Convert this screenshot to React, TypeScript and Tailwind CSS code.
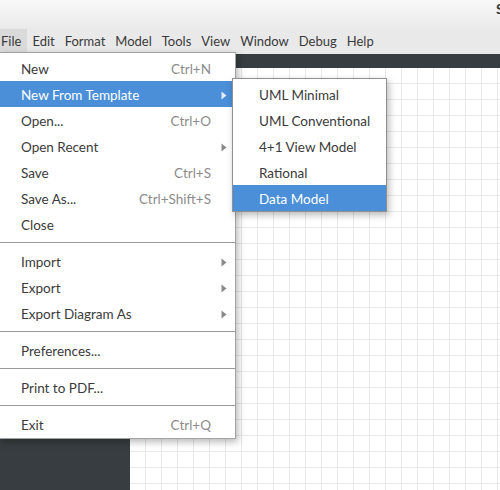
import React from "react";

type Item =
  | { type: "item"; label: string; shortcut?: string; sub?: boolean; active?: boolean }
  | { type: "sep" };

const fileItems: Item[] = [
  { type: "item", label: "New", shortcut: "Ctrl+N" },
  { type: "item", label: "New From Template", sub: true, active: true },
  { type: "item", label: "Open...", shortcut: "Ctrl+O" },
  { type: "item", label: "Open Recent", sub: true },
  { type: "item", label: "Save", shortcut: "Ctrl+S" },
  { type: "item", label: "Save As...", shortcut: "Ctrl+Shift+S" },
  { type: "item", label: "Close" },
  { type: "sep" },
  { type: "item", label: "Import", sub: true },
  { type: "item", label: "Export", sub: true },
  { type: "item", label: "Export Diagram As", sub: true },
  { type: "sep" },
  { type: "item", label: "Preferences..." },
  { type: "sep" },
  { type: "item", label: "Print to PDF..." },
  { type: "sep" },
  { type: "item", label: "Exit", shortcut: "Ctrl+Q" },
];

const templates = ["UML Minimal", "UML Conventional", "4+1 View Model", "Rational", "Data Model"];

const menus = ["File", "Edit", "Format", "Model", "Tools", "View", "Window", "Debug", "Help"];

function Arrow({ active }: { active?: boolean }) {
  return (
    <svg width="6" height="9" viewBox="0 0 6 9" className="shrink-0">
      <path d="M0.5 0.5 L5.5 4.5 L0.5 8.5 Z" fill={active ? "#e6eef8" : "#8a8a8a"} />
    </svg>
  );
}

export default function App() {
  return (
    <div
      className="relative w-[500px] h-[490px] overflow-hidden flex flex-col text-[13.5px] text-[#3b3b3b]"
      style={{ fontFamily: "Lato, 'Noto Sans', sans-serif" }}
    >
      {/* title bar */}
      <div className="h-[28px] shrink-0 bg-[linear-gradient(to_bottom,#f8f8f8,#ebebeb)] pl-[496px] pt-[1px] whitespace-nowrap overflow-hidden font-bold text-[14px] text-[#2e3a44] leading-[16px]">
        StarUML
      </div>
      {/* menu bar */}
      <div className="h-[26px] shrink-0 bg-[#e9e9e9] flex items-stretch pb-[2px] pt-[1px] text-[13px]">
        {menus.map((m, i) => (
          <div
            key={m}
            className={`flex items-center leading-none pt-[2px] ${i === 0 ? "bg-[#dadada] pl-[1px] pr-[6px]" : "px-[5px]"} text-[#3a3a3a]`}
          >
            {m}
          </div>
        ))}
      </div>
      {/* body */}
      <div className="flex-1 bg-[#373d40] flex flex-col">
        <div className="flex-1 mt-[14px] ml-[130px] bg-white bg-[linear-gradient(to_right,#e9e9e9_1px,transparent_1px),linear-gradient(to_bottom,#e9e9e9_1px,transparent_1px)] bg-[size:16px_16px] bg-[position:15px_15px]" />
      </div>

      {/* File dropdown */}
      <div className="absolute left-0 top-[52px] w-[236px] bg-white border border-l-0 border-[#a3a3a3] shadow-[2px_3px_7px_rgba(0,0,0,0.28)] pt-[2px] pb-px">
        {fileItems.map((it, i) =>
          it.type === "sep" ? (
            <div key={i} className="h-px bg-[#9a9a9a] my-[5px]" />
          ) : (
            <div
              key={i}
              className={`h-[26px] flex items-center pl-[21px] pr-[8px] pt-[2px] ${it.active ? "bg-[#4a8fd8] text-white" : ""}`}
            >
              <span className="flex-1 whitespace-nowrap">{it.label}</span>
              {it.shortcut && (
                <span className="text-[#8c8c8c] mr-[16px] whitespace-nowrap">{it.shortcut}</span>
              )}
              {it.sub && <Arrow active={it.active} />}
            </div>
          )
        )}
      </div>

      {/* Submenu */}
      <div className="absolute left-[232px] top-[78px] w-[155px] bg-white border border-[#8f8f8f] shadow-[2px_3px_7px_rgba(0,0,0,0.28)] pt-[2px]">
        {templates.map((t, i) => (
          <div
            key={t}
            className={`h-[26px] flex items-center pl-[26px] pt-[2px] whitespace-nowrap ${i === templates.length - 1 ? "bg-[#4a8fd8] text-white" : ""}`}
          >
            {t}
          </div>
        ))}
      </div>
    </div>
  );
}
